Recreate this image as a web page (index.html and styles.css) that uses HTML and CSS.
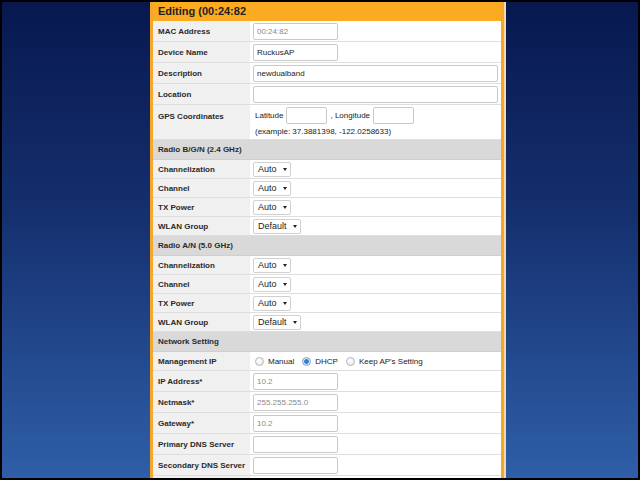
FILE: index.html
```html
<!DOCTYPE html>
<html>

<head>
    <title>Editing AP</title>
    <meta charset="utf-8">
    <link rel="stylesheet" href="styles.css">
</head>

<body>
    <div class="screen">
        <div class="panel">
            <div class="title">Editing (00:24:82</div>

            <div class="row">
                <div class="lbl">MAC Address</div>
                <div class="val"><input class="txt short dim" type="text" value="00:24:82" disabled></div>
            </div>
            <div class="row">
                <div class="lbl">Device Name</div>
                <div class="val"><input class="txt short" type="text" value="RuckusAP"></div>
            </div>
            <div class="row">
                <div class="lbl">Description</div>
                <div class="val"><input class="txt long" type="text" value="newdualband"></div>
            </div>
            <div class="row">
                <div class="lbl">Location</div>
                <div class="val"><input class="txt long" type="text" value=""></div>
            </div>
            <div class="row tall">
                <div class="lbl">GPS Coordinates</div>
                <div class="val stack">
                    <div class="line">
                        <span>Latitude</span>
                        <input class="txt tiny" type="text">
                        <span>, Longitude</span>
                        <input class="txt tiny" type="text">
                    </div>
                    <div class="hint">(example: 37.3881398, -122.0258633)</div>
                </div>
            </div>

            <div class="sec">Radio B/G/N (2.4 GHz)</div>
            <div class="row small">
                <div class="lbl">Channelization</div>
                <div class="val"><span class="pick">Auto<i class="caret"></i></span></div>
            </div>
            <div class="row small">
                <div class="lbl">Channel</div>
                <div class="val"><span class="pick">Auto<i class="caret"></i></span></div>
            </div>
            <div class="row small">
                <div class="lbl">TX Power</div>
                <div class="val"><span class="pick">Auto<i class="caret"></i></span></div>
            </div>
            <div class="row small">
                <div class="lbl">WLAN Group</div>
                <div class="val"><span class="pick">Default<i class="caret"></i></span></div>
            </div>

            <div class="sec">Radio A/N (5.0 GHz)</div>
            <div class="row small">
                <div class="lbl">Channelization</div>
                <div class="val"><span class="pick">Auto<i class="caret"></i></span></div>
            </div>
            <div class="row small">
                <div class="lbl">Channel</div>
                <div class="val"><span class="pick">Auto<i class="caret"></i></span></div>
            </div>
            <div class="row small">
                <div class="lbl">TX Power</div>
                <div class="val"><span class="pick">Auto<i class="caret"></i></span></div>
            </div>
            <div class="row small">
                <div class="lbl">WLAN Group</div>
                <div class="val"><span class="pick">Default<i class="caret"></i></span></div>
            </div>

            <div class="sec">Network Setting</div>
            <div class="row small">
                <div class="lbl">Management IP</div>
                <div class="val">
                    <label class="opt"><input type="radio" name="mip">Manual</label>
                    <label class="opt"><input type="radio" name="mip" checked>DHCP</label>
                    <label class="opt"><input type="radio" name="mip">Keep AP's Setting</label>
                </div>
            </div>
            <div class="row">
                <div class="lbl">IP Address*</div>
                <div class="val"><input class="txt short dim" type="text" value="10.2" disabled></div>
            </div>
            <div class="row">
                <div class="lbl">Netmask*</div>
                <div class="val"><input class="txt short dim" type="text" value="255.255.255.0" disabled></div>
            </div>
            <div class="row">
                <div class="lbl">Gateway*</div>
                <div class="val"><input class="txt short dim" type="text" value="10.2" disabled></div>
            </div>
            <div class="row">
                <div class="lbl">Primary DNS Server</div>
                <div class="val"><input class="txt short" type="text"></div>
            </div>
            <div class="row">
                <div class="lbl">Secondary DNS Server</div>
                <div class="val"><input class="txt short" type="text"></div>
            </div>
            <div class="row">
                <div class="lbl"></div>
                <div class="val"></div>
            </div>
        </div>
    </div>
</body>

</html>
```

FILE: styles.css
```css
body {
    margin: 0;
    font-family: "Liberation Sans", Arial, sans-serif;
}

.screen {
    display: flex;
    width: 640px;
    height: 480px;
    box-sizing: border-box;
    border: 2px solid #000;
    padding-left: 148px;
    background: linear-gradient(to bottom, #08184f 0%, #15306f 45%, #2f5fa8 100%);
    overflow: hidden;
}

.panel {
    width: 354px;
    box-sizing: border-box;
    border-left: 3px solid #f6a62a;
    border-right: 3px solid #f6a62a;
    box-shadow: 2px 0 0 #f7d9a6;
    background: #fff;
    overflow: hidden;
}

.title {
    height: 19px;
    line-height: 19px;
    margin: 0 -3px;
    padding-left: 8px;
    background: #fbab22;
    color: #222;
    font-size: 11px;
    font-weight: bold;
}

.row {
    display: flex;
    height: 21px;
    box-sizing: border-box;
    border-bottom: 1px solid #dedede;
}

.row.small {
    height: 19px;
}

.row.tall {
    height: 35px;
}

.lbl {
    display: flex;
    align-items: center;
    width: 97px;
    box-sizing: border-box;
    padding-left: 5px;
    background: #f0f0f0;
    color: #2a2a2a;
    font-size: 8px;
    font-weight: bold;
    white-space: nowrap;
}

.row.tall .lbl {
    align-items: flex-start;
    padding-top: 7px;
}

.val {
    display: flex;
    align-items: center;
    flex: 1;
    padding-left: 3px;
    color: #222;
    font-size: 8px;
}

.val.stack {
    flex-direction: column;
    align-items: flex-start;
    padding-left: 5px;
}

.line {
    display: flex;
    align-items: center;
    gap: 3px;
    height: 21px;
    white-space: nowrap;
}

.hint {
    line-height: 11px;
}

.txt {
    height: 17px;
    box-sizing: border-box;
    border: 1px solid #c9c9c9;
    border-radius: 2px;
    padding: 0 3px;
    margin: 0;
    background: #fff;
    color: #222;
    font-family: "Liberation Sans", Arial, sans-serif;
    font-size: 8px;
    outline: none;
}

.txt.dim {
    color: #8a8a8a;
}

.txt.short {
    width: 85px;
}

.txt.long {
    width: 245px;
}

.txt.tiny {
    width: 41px;
}

.pick {
    display: inline-flex;
    align-items: center;
    height: 15px;
    box-sizing: border-box;
    border: 1px solid #d0d0d0;
    border-radius: 2px;
    padding: 0 3px 0 4px;
    background: #fff;
    color: #222;
    font-size: 9px;
}

.caret {
    width: 0;
    height: 0;
    margin-left: 6px;
    border-left: 2.5px solid transparent;
    border-right: 2.5px solid transparent;
    border-top: 3px solid #222;
}

.opt {
    display: inline-flex;
    align-items: center;
    margin-right: 6px;
    color: #222;
    font-size: 8px;
}

.opt input {
    appearance: none;
    width: 9px;
    height: 9px;
    margin: 0 4px 0 2px;
    border: 1px solid #b4b4b4;
    border-radius: 50%;
    background: radial-gradient(circle at 40% 35%, #fff 0, #e4e4e4 100%);
}

.opt input:checked {
    border-color: #8aa6c4;
    background: radial-gradient(circle, #2f7fd6 0, #2f7fd6 2px, #cfe2f5 2.6px);
}

.sec {
    height: 20px;
    line-height: 20px;
    box-sizing: border-box;
    padding-left: 5px;
    border-bottom: 1px solid #cfcfcf;
    background: #d9d9d9;
    color: #2a2a2a;
    font-size: 8px;
    font-weight: bold;
}
```
